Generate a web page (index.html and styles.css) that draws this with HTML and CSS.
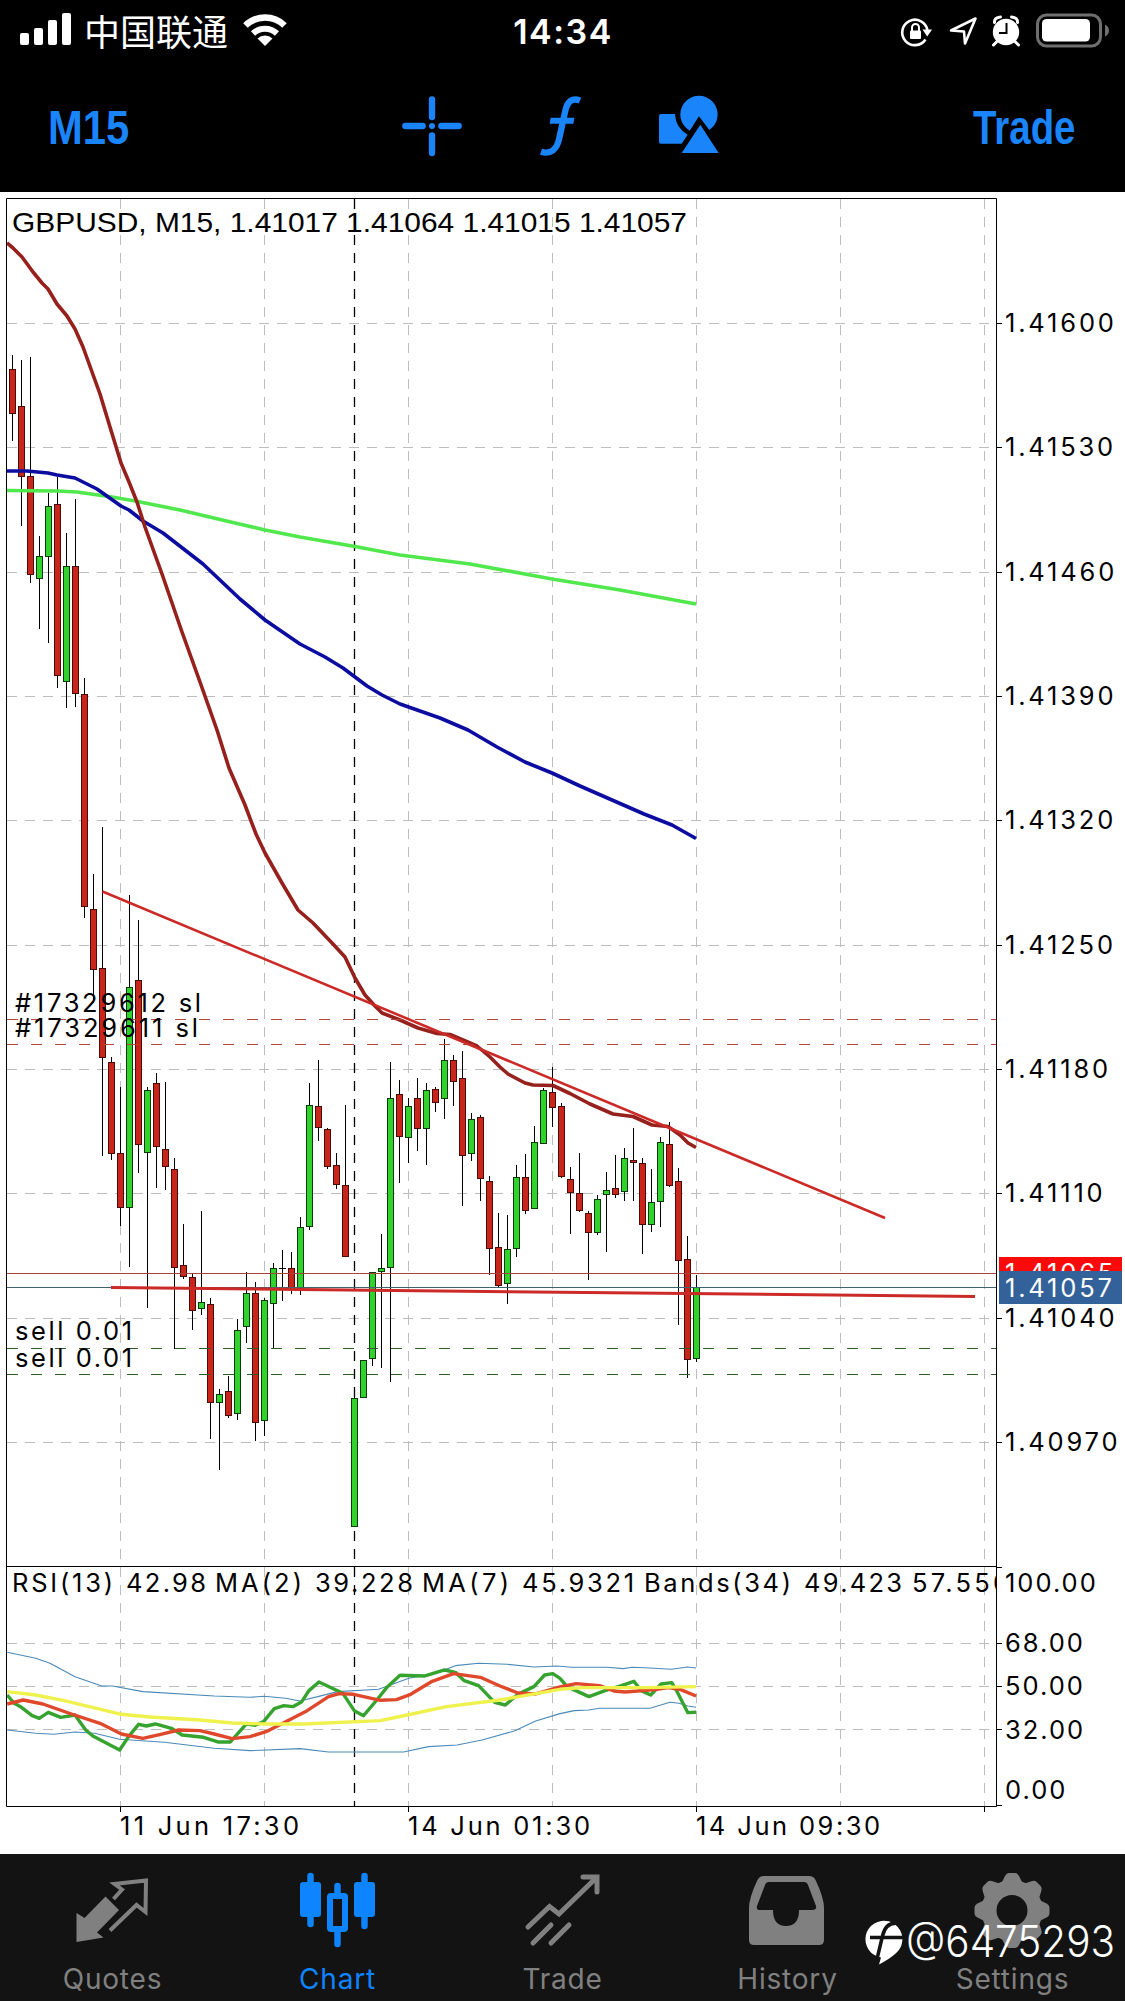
FILE: index.html
```html
<!DOCTYPE html>
<html lang="en">
<head>
  <meta charset="UTF-8">
  <title>GBPUSD, M15</title>
  <link rel="stylesheet" href="styles.css">
</head>
<body>
  <div class="phone">
    <div class="status-bar">
      <div class="carrier">
        <svg class="signal" width="52" height="34" viewBox="0 0 52 34">
          <rect x="0" y="20" width="9" height="12" rx="2"/>
          <rect x="14" y="15" width="9" height="17" rx="2"/>
          <rect x="28" y="7" width="9" height="25" rx="2"/>
          <rect x="42" y="0" width="9" height="32" rx="2"/>
        </svg>
        <span class="carrier-name">中国联通</span>
        <svg class="wifi" width="46" height="34" viewBox="0 0 46 34">
          <path d="M3.5 12.5a28 28 0 0 1 39 0" fill="none" stroke="#fff" stroke-width="6.5"/>
          <path d="M11 20.5a17.5 17.5 0 0 1 24 0" fill="none" stroke="#fff" stroke-width="6"/>
          <path d="M15.5 25.5a11 11 0 0 1 15 0L23 33z"/>
        </svg>
      </div>
      <div class="clock">14:34</div>
      <svg class="indicators" width="214" height="36" viewBox="0 0 214 36">
        <!-- rotation lock -->
        <path d="M25.5 27.5A12.7 12.7 0 1 1 27.4 18" fill="none" stroke="#fff" stroke-width="2.6"/>
        <path d="M22.5 17.5h9.5l-4.8 7z"/>
        <rect x="10" y="18.500" width="11" height="8.500" rx="1"/>
        <path d="M12 19v-3.500a3.500 3.500 0 0 1 7 0V19" fill="none" stroke="#fff" stroke-width="2"/>
        <!-- location -->
        <path d="M51 18.500L75.500 6.500 65 31.500 64 19.500z" fill="none" stroke="#fff" stroke-width="2.6" stroke-linejoin="round"/>
        <!-- alarm -->
        <circle cx="106" cy="20" r="13.200"/>
        <path d="M94.500 10.500q-.5-5 6-5.500M117.500 10.500q.5-5-6-5.500M97.500 29l-4 4M114.500 29l4 4" fill="none" stroke="#fff" stroke-width="3" stroke-linecap="round"/>
        <path d="M106.500 11v10H99" fill="none" stroke="#000" stroke-width="2"/>
        <!-- battery -->
        <rect x="137.500" y="3" width="63" height="31" rx="9" fill="none" stroke="#6f6f6f" stroke-width="3"/>
        <rect x="142" y="7" width="48" height="22.500" rx="4.500"/>
        <path d="M205 12.500q4 2 4 6t-4 6z" fill="#6f6f6f"/>
      </svg>
    </div>

    <div class="toolbar">
      <div class="tool-text"><span class="timeframe">M15</span></div>
      <div class="tool-icons">
        <svg width="60" height="60" viewBox="51 48 180 180">
          <path d="M61 138h52M169 138h52M141 58v53M141 166v53" fill="none" stroke="#1a84fb" stroke-width="19" stroke-linecap="round"/>
          <circle cx="141" cy="138" r="9"/>
        </svg>
        <svg width="43" height="60" viewBox="462 46 129 180">
          <path d="M585 60C562 50 547 62 541 90L523 172C516 208 496 222 468 213" fill="none" stroke="#1a84fb" stroke-width="19"/>
          <path d="M497 111h71l-3 18h-71z"/>
        </svg>
        <svg width="60" height="57" viewBox="825 51 180 171">
          <path d="M831 105h42q2 42 38 62l-18 27h-62q-6 0-6-6v-77q0-6 6-6z"/>
          <path d="M917 155A56 56 0 1 1 976 153L945 112z"/>
          <path d="M949 137l55 85H893z"/>
        </svg>
      </div>
      <div class="tool-text"><span class="trade">Trade</span></div>
    </div>

    <svg class="chart" width="1125" height="1662" viewBox="0 192 1125 1662">
      <defs>
        <clipPath id="plot"><rect x="7" y="199" width="989" height="1607"/></clipPath>
      </defs>
      <g id="grid" class="grid"></g>
      <path class="day-line" d="M354.500 199V1806"/>

      <g clip-path="url(#plot)">
        <g id="candles"></g>
        <polyline class="ma ma-green" points="7,490.500 57,491 77,492 112,497 135,501 180,510 235,523 265,530 300,537 355,546.500 400,555 470,564 552,579 620,590 696,604"/>
        <polyline class="ma ma-blue" points="7,471 27,471 48,473 57,475 75,478 85,483 97,489 121,506 129,510 143,521 163,533 203,564 240,599 265,620 300,644 325,657 343,668 355,677 367,686 382,695 400,704 440,718 468,730 497,747 525,762 552,773 580,786 612,800 644,814 672,825 696,838.500"/>
        <polyline class="ma ma-brown" points="7,243 13,248 22,257 33,272 42,283 48,289 57,304 67,316 75,329 83,347 100,394 110,427 121,463 129,482 137,502 145,527 162,574 182,632 200,682 217,730 229,768 245,805 256,834 265,853 282,883 298,910 313,923 333,944 345,957 355,978 365,995 375,1006 382,1013 400,1020 418,1028 437,1033.500 450,1034.500 463,1040 477,1046 490,1057 500,1067 508,1074 525,1083 533,1085 553,1085.500 570,1093.500 590,1104 613,1114 633,1116.500 652,1125 668,1126.500 680,1135 688,1143 696,1147.500"/>

        <path class="order-line sl" d="M7 1019.500H996M7 1044.500H996"/>
        <path class="order-line sell" d="M7 1348.500H996M7 1374.500H996"/>
        <path d="M7 1273.500H996" stroke="#a8443e"/>
        <path d="M7 1287.500H996" stroke="#3f6470"/>
        <path class="trend" d="M102.500 891.500L885 1218"/>
        <path class="trend level" d="M111 1287.500L975 1296.500"/>
      </g>

      <!-- RSI window -->
      <g class="rsi" transform="translate(0 1540) scale(.35714 .3333)">
        <polyline class="band" points="20,337 100,355 140,370 210,410 285,438 315,438 400,455 600,468 700,472 740,469 800,475 840,483 890,470 945,455 1060,448 1145,415 1220,400 1275,377 1340,370 1420,373 1495,381 1560,378 1600,382 1700,382 1745,386 1770,382 1820,384 1880,388 1925,381 1949,384"/>
        <polyline class="band" points="20,570 100,580 150,583 210,576 265,580 335,598 460,607 600,625 700,632 840,626 920,636 1130,636 1200,620 1280,615 1350,600 1440,573 1500,543 1568,521 1608,512 1648,510 1678,505 1820,505 1876,487 1901,490 1926,498 1949,502"/>
        <polyline stroke="#35a32e" points="20,465 40,490 60,502 90,527 110,535 135,517 170,532 210,525 240,570 260,588 335,630 360,590 388,553 410,558 435,552 480,565 510,585 570,592 610,606 645,606 690,552 715,556 738,545 768,506 795,497 820,500 845,485 865,452 893,426 960,460 992,512 1018,527 1055,480 1085,440 1120,406 1190,408 1245,390 1275,397 1300,422 1340,437 1385,487 1415,495 1450,463 1495,440 1525,405 1548,401 1568,415 1588,440 1649,470 1694,452 1740,437 1775,424 1795,452 1822,465 1851,432 1881,428 1896,455 1926,518 1949,517"/>
        <polyline stroke="#e0482c" points="20,492 65,480 120,492 200,522 280,550 340,582 400,595 450,583 500,570 560,572 600,582 650,596 700,590 745,575 800,545 860,512 920,470 950,461 990,463 1065,481 1110,479 1150,463 1210,424 1270,401 1345,412 1400,438 1450,459 1500,462 1568,441 1613,431 1679,437 1719,453 1750,456 1835,449 1871,443 1906,449 1949,468"/>
        <polyline stroke="#eff24c" points="20,455 100,465 180,482 250,500 340,523 420,531 560,540 650,549 740,552 850,552 1065,542 1140,525 1250,500 1400,480 1568,448 1630,443 1810,443 1949,440"/>
      </g>

      <!-- frame and ticks -->
      <path class="frame" d="M6.500 1806.500V198.500H996.500V1806.500zM6.500 1566.500H996.500"/>
      <path id="ticks" class="frame"/>

      <text class="title" x="12" y="231.500" textLength="675" lengthAdjust="spacingAndGlyphs">GBPUSD, M15, 1.41017 1.41064 1.41015 1.41057</text>
      <g id="prices" class="label"></g>
      <g class="label">
        <text x="15" y="1012" textLength="188">#17329612 sl</text>
        <text x="15" y="1037" textLength="185">#17329611 sl</text>
        <text x="15" y="1340" textLength="119">sell 0.01</text>
        <text x="15" y="1367" textLength="119">sell 0.01</text>
        <text x="120" y="1834.500" textLength="181">11 Jun 17:30</text>
        <text x="408" y="1834.500" textLength="184">14 Jun 01:30</text>
        <text x="696" y="1834.500" textLength="186">14 Jun 09:30</text>
        <g clip-path="url(#plot)">
          <text x="12" y="1592" textLength="103">RSI(13)</text>
          <text x="126" y="1592" textLength="82">42.98</text>
          <text x="215" y="1592" textLength="89">MA(2)</text>
          <text x="315" y="1592" textLength="100">39.228</text>
          <text x="422" y="1592" textLength="89">MA(7)</text>
          <text x="522" y="1592" textLength="114">45.9321</text>
          <text x="644" y="1592" textLength="149">Bands(34)</text>
          <text x="804" y="1592" textLength="100">49.423</text>
          <text x="912" y="1592" textLength="118">57.5502</text>
        </g>
      </g>

      <rect x="999" y="1257" width="123" height="30" fill="#fb0a0a"/>
      <text class="label price badge" x="1005" y="1282">1.41065</text>
      <rect x="999" y="1271" width="123" height="33" fill="#33629a"/>
      <text class="label price badge" x="1005" y="1297">1.41057</text>
    </svg>

    <div class="tab-bar">
      <div class="tab">
        <svg width="75" height="75" viewBox="0 0 75 75">
          <path d="M38.500 27L47 17.500 39.500 12 71 8.500 70.500 40 61.500 33 35 58.500" fill="none" stroke="#808080" stroke-width="4"/>
          <path d="M30.500 24.500L44 38 22 60.500 28.500 65.500 1.500 70V41l8 5z"/>
        </svg>
        <span>Quotes</span>
      </div>
      <div class="tab active">
        <svg width="75" height="75" viewBox="0 0 75 75">
          <rect x="0" y="10" width="21" height="35" rx="3"/>
          <rect x="54" y="10" width="21" height="35" rx="3"/>
          <path d="M10.500 4v48M64.500 4v50M37.500 14v10M37.500 58v14" stroke="#0f84ff" stroke-width="6.500" stroke-linecap="round"/>
          <rect x="30" y="24" width="15" height="33" rx="1" fill="none" stroke="#0f84ff" stroke-width="6"/>
        </svg>
        <span>Chart</span>
      </div>
      <div class="tab">
        <svg width="75" height="75" viewBox="0 0 75 75">
          <path d="M3 55L24.500 34.500 34 42 71 6M58 5h14v15M8 71L26 53M26 71L44 53" fill="none" stroke="#808080" stroke-width="5" stroke-linecap="round"/>
        </svg>
        <span>Trade</span>
      </div>
      <div class="tab">
        <svg width="75" height="75" viewBox="0 0 75 75">
          <path fill-rule="evenodd" d="M14 4h45q5 0 7 5 8 17 8 27v32q0 5-5 5H4q-5 0-5-5V36Q-1 26 7 9q2-5 7-5zM19 10q-3 0-4 3L7 34q-1 4 3 4h13q0 16 13 16t13-16h13q5 0 4-4L58 13q-1-3-4-3z"/>
        </svg>
        <span>History</span>
      </div>
      <div class="tab">
        <svg width="75" height="75" viewBox="0 0 75 75">
          <g id="teeth"></g>
          <circle cx="37" cy="38.500" r="23" fill="none" stroke="#808080" stroke-width="15"/>
        </svg>
        <span>Settings</span>
      </div>
      <svg class="watermark" width="252" height="60" viewBox="0 0 252 60">
        <path d="M18 44.500A18.500 18.500 0 1 1 38.500 32Q36 41 16 51.500z"/>
        <path class="cut" d="M36 10.500Q23 8 19.500 23L14 46M7 24.500h34"/>
        <text x="43" y="43.500" textLength="209" lengthAdjust="spacingAndGlyphs">@6475293</text>
      </svg>
    </div>
  </div>

  <script src="chart.js"></script>
</body>
</html>
```

FILE: styles.css
```css
body {
  margin: 0;
  background: #fff;
  font-family: Inter, Roboto, sans-serif;
}
.phone {
  width: 1125px;
  height: 2001px;
  overflow: hidden;
}
svg {
  display: block;
  overflow: visible;
}
.status-bar {
  display: grid;
  grid-template-columns: 1fr 140px 1fr;
  align-items: center;
  box-sizing: border-box;
  height: 60px;
  padding: 0 11px 0 20px;
  background: #000;
  color: #fff;
}
.status-bar svg {
  fill: #fff;
}
.carrier {
  display: flex;
  align-items: center;
}
.carrier-name {
  margin: 0 14px 0 12px;
  font: 36px/60px "Noto Sans CJK SC", sans-serif;
}
.clock {
  padding: 2px 8px 0 0;
  font-size: 34px;
  font-weight: 600;
  letter-spacing: 1.5px;
  text-align: center;
}
.indicators {
  justify-self: end;
}
.toolbar {
  display: flex;
  justify-content: space-between;
  box-sizing: border-box;
  height: 132px;
  padding: 36px 42px 0 48px;
  background: #000;
  color: #1a84fb;
}
.toolbar svg {
  fill: #1a84fb;
}
.tool-text {
  width: 110px;
  font: bold 48px/64px "Liberation Sans", sans-serif;
}
.tool-text span {
  display: inline-block;
  transform-origin: left;
}
.timeframe {
  transform: scaleX(.87);
}
.trade {
  transform: scaleX(.8);
}
.tool-icons {
  display: flex;
  gap: 77px;
  margin-right: 10px;
}
.chart {
  background: #fff;
}
.grid {
  fill: none;
  stroke: #bdbdbd;
  stroke-dasharray: 10 8;
}
.day-line {
  stroke: #000;
  stroke-width: 1.3;
  stroke-dasharray: 10 8;
}
.frame {
  fill: none;
  stroke: #000;
}
.up {
  fill: #32d22d;
  stroke: #0d3a0c;
}
.down {
  fill: #c8261b;
  stroke: #4a0c08;
}
.wick {
  stroke: #000;
}
.ma {
  fill: none;
  stroke-width: 3.6;
  stroke-linejoin: round;
}
.ma-green {
  stroke: #50e84c;
}
.ma-blue {
  stroke: #0c0ca0;
}
.ma-brown {
  stroke: #96211c;
}
.order-line {
  stroke-dasharray: 11 13;
}
.sl {
  stroke: #b4483e;
}
.sell {
  stroke: #2f5a28;
}
.trend {
  stroke: #cb2a27;
  stroke-width: 2.6;
}
.level {
  stroke-width: 3;
}
.rsi polyline {
  fill: none;
  stroke-width: 3.4;
  stroke-linejoin: round;
  vector-effect: non-scaling-stroke;
}
.rsi .band {
  stroke: #4a8ab8;
  stroke-width: 1.1;
}
.title {
  font: 28px "Liberation Sans", sans-serif;
}
.label {
  font-size: 25.5px;
  letter-spacing: 2px;
}
.price {
  letter-spacing: 2.8px;
}
.badge {
  fill: #fff;
}
.tab-bar {
  position: relative;
  display: flex;
  height: 147px;
  background: #131313;
}
.tab {
  display: flex;
  flex-direction: column;
  align-items: center;
  width: 225px;
  padding-top: 18px;
  color: #808080;
  font-size: 28px;
  line-height: 34px;
  letter-spacing: .8px;
}
.tab svg {
  margin-bottom: 15px;
  fill: #808080;
}
.tab.active {
  color: #0f84ff;
}
.tab.active svg {
  fill: #0f84ff;
}
/* user tag lies over the Settings tab */
.watermark {
  position: absolute;
  left: 863px;
  top: 59px;
  fill: #fff;
}
.watermark .cut {
  fill: none;
  stroke: #131313;
  stroke-width: 3.5;
}
.watermark text {
  font-size: 43px;
  font-weight: 300;
}
```

FILE: chart.js
```js
// high, body top, body bottom, low (chart pixels), 1 = up
const bars = [
  [355,369,413,441,0],[360,406,476,526,0],[357,476,574,583,0],[536,556,578,629,1],[493,506,556,643,1],
  [477,504,675,688,0],[533,566,681,708,1],[499,566,693,707,0],[678,694,906,918,0],[874,909,969,1003,0],
  [827,968,1057,1156,0],[1057,1062,1153,1160,0],[1087,1153,1207,1226,0],[895,987,1207,1267,1],[920,980,1144,1173,0],
  [1087,1090,1152,1308,1],[1073,1083,1146,1188,0],[1082,1149,1166,1190,0],[1158,1169,1267,1349,0],[1224,1265,1276,1279,0],
  [1273,1277,1310,1330,0],[1211,1302,1308,1315,1],[1298,1304,1402,1439,0],[1389,1394,1402,1470,1],[1376,1391,1415,1418,0],
  [1319,1330,1413,1420,1],[1272,1293,1326,1343,1],[1282,1293,1422,1441,0],[1298,1300,1420,1436,1],[1263,1268,1303,1349,1],
  [1250,1268,1268,1301,0],[1252,1268,1287,1294,0],[1217,1227,1288,1295,1],[1083,1105,1226,1230,1],[1060,1106,1127,1141,0],
  [1128,1129,1166,1169,0],[1153,1165,1184,1189,0],[1105,1185,1256,1256,0],[1396,1398,1526,1526,1],[1360,1360,1397,1397,1],
  [1272,1272,1358,1366,1],[1234,1268,1271,1368,1],[1062,1098,1267,1382,1],[1080,1094,1136,1183,0],[1098,1106,1137,1163,1],
  [1078,1098,1128,1151,0],[1083,1090,1128,1165,1],[1087,1089,1102,1112,0],[1039,1060,1098,1119,1],[1055,1060,1081,1106,0],
  [1051,1078,1155,1206,0],[1113,1119,1153,1161,1],[1115,1117,1178,1201,0],[1176,1181,1248,1275,0],[1213,1247,1285,1288,0],
  [1215,1249,1283,1304,1],[1165,1177,1248,1257,1],[1154,1177,1210,1214,0],[1126,1142,1208,1209,1],[1088,1090,1143,1144,1],
  [1067,1092,1107,1127,0],[1103,1106,1176,1178,0],[1167,1179,1192,1234,0],[1153,1193,1210,1212,0],[1211,1213,1232,1280,0],
  [1195,1199,1232,1235,1],[1172,1190,1194,1252,1],[1155,1188,1194,1198,0],[1148,1158,1191,1201,1],[1128,1160,1162,1201,0],
  [1158,1163,1224,1254,0],[1169,1202,1224,1232,1],[1137,1142,1201,1227,1],[1122,1144,1185,1187,0],[1168,1181,1260,1325,0],
  [1236,1259,1359,1378,0],[1275,1287,1358,1362,1]
];

let html = '';
bars.forEach(([high, top, bottom, low, up], i) => {
  const x = 12.5 + i * 9;
  html += `<path class="wick" d="M${x} ${high}V${low}"/>`;
  if (top === bottom) {
    html += `<path class="wick" d="M${x - 3.5} ${top + 0.5}h7"/>`;
  } else {
    html += `<rect class="${up ? 'up' : 'down'}" x="${x - 3}" y="${top + 0.5}" width="6" height="${bottom - top}"/>`;
  }
});
document.getElementById('candles').innerHTML = html;

// grid, price labels and ticks
const rows = [323.5, 447.5, 572.5, 696.5, 820.5, 945.5, 1069.5, 1193.5, 1318.5, 1442.5];
const rsiRows = [[1643.5, '68.00', 1651.5], [1686.5, '50.00', 1694.5], [1729.5, '32.00', 1738.5]];
let grid = '';
let ticks = 'M997 1567.5h5M997 1805.5h5';
let labels = '<text x="1005" y="1592">100.00</text><text x="1005" y="1798.500">0.00</text>';
for (let x = 120.5; x < 996; x += 144) {
  grid += `<path d="M${x} 199V1806"/>`;
}
for (let x = 120.5; x < 996; x += 288) {
  ticks += `M${x} 1807v5`;
}
rows.forEach((y, i) => {
  grid += `<path d="M7 ${y}H996"/>`;
  ticks += `M997 ${y}h5`;
  labels += `<text class="price" x="1005" y="${y + 8.5}">${(1.416 - i * 0.0007).toFixed(5)}</text>`;
});
rsiRows.forEach(([y, text, base]) => {
  grid += `<path d="M7 ${y}H996"/>`;
  ticks += `M997 ${y}h5`;
  labels += `<text x="1005" y="${base}">${text}</text>`;
});
document.getElementById('grid').innerHTML = grid;
document.getElementById('ticks').setAttribute('d', ticks);
document.getElementById('prices').innerHTML = labels;

// gear teeth
let teeth = '';
for (let a = 0; a < 360; a += 45) {
  teeth += `<path d="M25 14L30 4Q31.500 1 34 1h6q2.500 0 4 3l5 10z" transform="rotate(${a} 37 38.500)"/>`;
}
document.getElementById('teeth').innerHTML = teeth;
```
